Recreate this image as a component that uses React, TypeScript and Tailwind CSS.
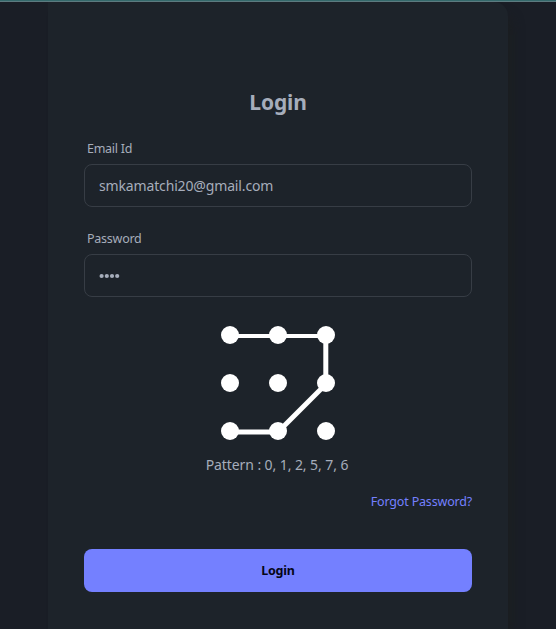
import React from "react";

const dots = [0, 1, 2, 3, 4, 5, 6, 7, 8];

function PatternLock() {
  return (
    <svg className="mx-auto mt-[23px] block" width="124" height="124" viewBox="216 321 124 124" fill="white" stroke="white">
      <path d="M230 336H326" strokeWidth="4" />
      <path d="M325.8 335V383" strokeWidth="5" />
      <path d="M326 384L279 431" strokeWidth="5" />
      <path d="M230 432H278" strokeWidth="5" />
      {dots.map((i) => (
        <circle key={i} cx={230 + (i % 3) * 48} cy={335 + Math.floor(i / 3) * 48} r="9" stroke="none" />
      ))}
    </svg>
  );
}

const inputClass =
  "block h-[43px] w-full rounded-[8px] border border-[#373d45] bg-transparent px-[14px] text-[14px] text-[#a6adbb] outline-none";

export default function App() {
  return (
    <div className="h-[629px] w-[556px] overflow-hidden bg-[#1a1e26] font-['Noto_Sans',sans-serif] text-[#a6adbb]">
      <div className="h-[2px] border-b border-[#5d7b80] bg-[#34696b]" />
      <main className="ml-[48px] h-[627px] w-[460px] rounded-tr-[14px] bg-[#1d232a] px-[36px] pt-[84px] shadow-[8px_10px_12px_-4px_#1b1e20]">
        <h1 className="h-[32px] text-center text-[21px] leading-[32px] font-bold tracking-[-0.15px]">Login</h1>
        <label className="mt-[21px] block h-[20px] pl-[3px] text-[12.5px] leading-[20px] tracking-[-0.28px]">Email Id</label>
        <input className={inputClass + " mt-[5px] tracking-[-0.15px]"} defaultValue="smkamatchi20@gmail.com" />
        <label className="mt-[22px] block h-[20px] pl-[3px] text-[12.5px] leading-[20px] tracking-[-0.25px]">Password</label>
        <div className={inputClass + " mt-[5px] flex items-center"}>
          <svg width="22" height="7" viewBox="0 0 22 7" fill="#a6adbb">
            {[2.6, 7.8, 13, 18.2].map((x) => (
              <circle key={x} cx={x} cy="4" r="2.1" />
            ))}
          </svg>
        </div>
        <div className="pt-px">
          <PatternLock />
        </div>
        <p className="mt-[10px] h-[20px] pr-[2px] text-center text-[14px] leading-[20px] tracking-[-0.08px]">Pattern : 0, 1, 2, 5, 7, 6</p>
        <a className="mt-[17px] block h-[20px] text-right text-[12.5px] leading-[20px] tracking-[-0.18px] text-[#7480ff]">Forgot Password?</a>
        <button className="mt-[37px] block h-[43px] w-full rounded-[8px] bg-[#7480ff] pt-[2px] text-[12.5px] font-bold tracking-[-0.2px] text-[#050617]">Login</button>
      </main>
    </div>
  );
}
